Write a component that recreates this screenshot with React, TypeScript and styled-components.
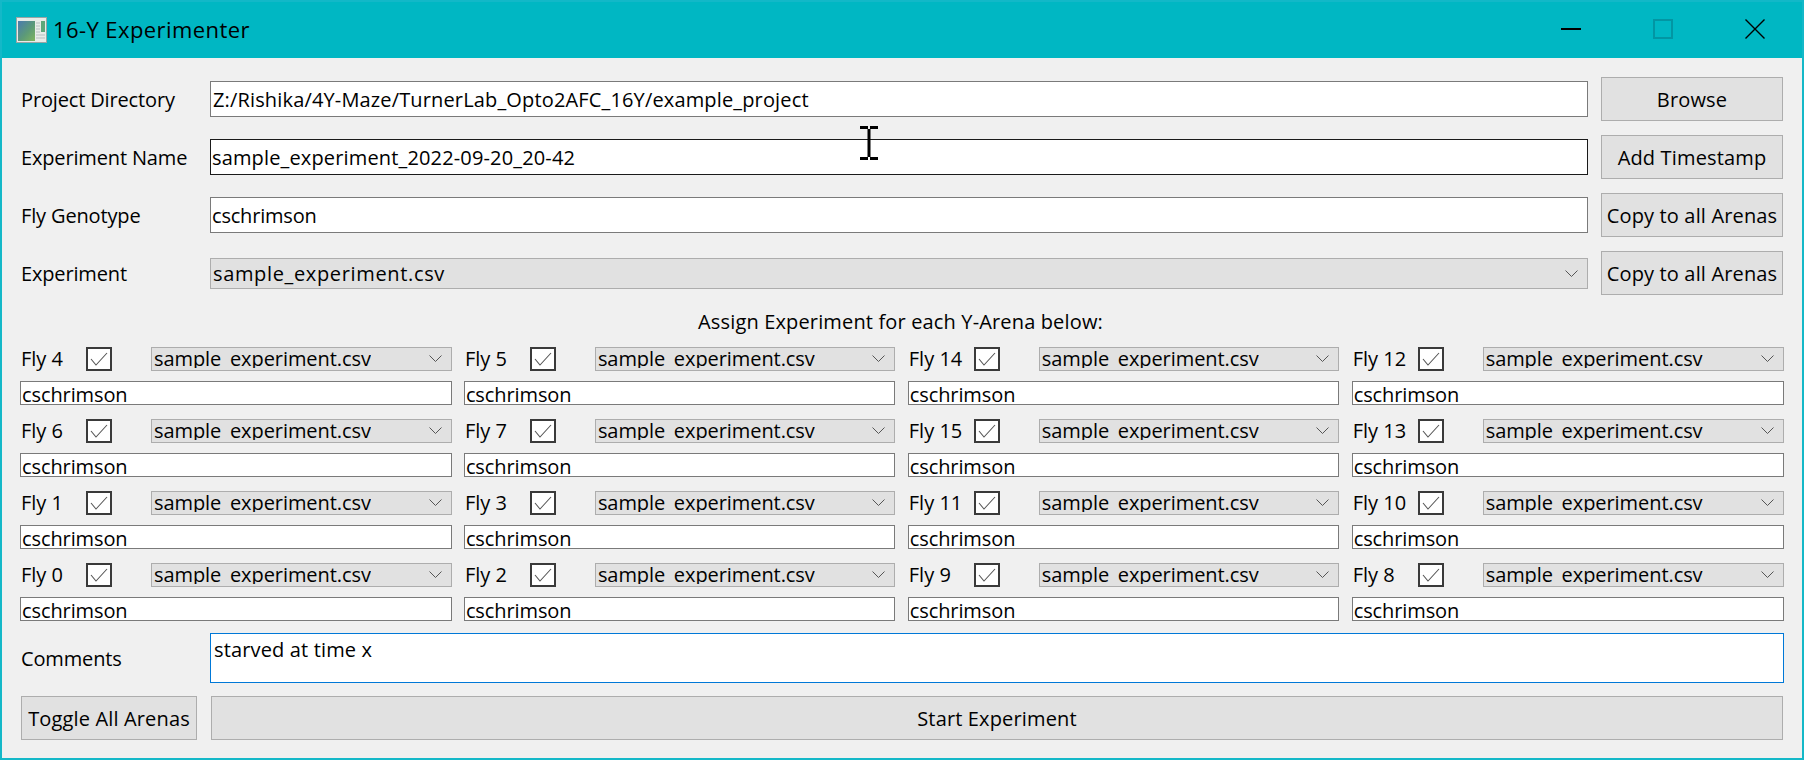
import React from "react";
import styled, { createGlobalStyle } from "styled-components";

const Global = createGlobalStyle`
  html, body { margin: 0; padding: 0; background: #00b7c3; }
  * { box-sizing: border-box; }
`;

const Window = styled.div`
  position: relative;
  width: 1804px;
  height: 760px;
  display: flex;
  flex-direction: column;
  border: 2px solid #14b8c8;
  border-top: none;
  background: #f0f0f0;
  overflow: hidden;
  font-family: "Open Sans", "Noto Sans", sans-serif;
  font-size: 20px;
  letter-spacing: 0.15px;
  color: #000;
`;

const TitleBar = styled.div`
  height: 58px;
  flex: none;
  display: flex;
  align-items: center;
  background: #00b7c3;
  border-top: 2px solid #12b8c8;
  padding-left: 14px;
`;

const TitleText = styled.span`
  margin-left: 6px;
  font-size: 22px;
  letter-spacing: 0.42px;
  padding-bottom: 2px;
`;

const Controls = styled.div`
  margin-left: auto;
  padding-right: 1px;
  display: flex;
  align-items: center;
`;

const ControlSlot = styled.div`
  width: 92px;
  height: 56px;
  padding-bottom: 2px;
  display: flex;
  align-items: center;
  justify-content: center;
`;

const Body = styled.div`
  flex: 1;
  display: flex;
  flex-direction: column;
  padding: 19px 18px 0 19px;
`;

const TopRow = styled.div`
  height: 44px;
  margin-bottom: 14px;
  display: grid;
  grid-template-columns: 176px 1378px 182px;
  column-gap: 13px;
  align-items: center;
`;

const Label = styled.div`
  white-space: nowrap;
  letter-spacing: -0.15px;
`;

const LineInput = styled.div<{ $active?: boolean }>`
  height: 36px;
  padding: 0 2px;
  display: flex;
  align-items: center;
  background: #fff;
  border: 1px solid ${(p) => (p.$active ? "#1a1a1a" : "#7a7a7a")};
  white-space: nowrap;
`;

const NameInput = styled(LineInput)`
  padding-left: 1px;
`;

const GenotypeInput = styled(NameInput)`
  letter-spacing: -0.2px;
`;

const Button = styled.div`
  height: 44px;
  display: flex;
  align-items: center;
  justify-content: center;
  background: #e1e1e1;
  border: 1px solid #adadad;
  white-space: nowrap;
`;

const MainCombo = styled.div`
  height: 31px;
  padding: 0 9px 0 2px;
  display: flex;
  align-items: center;
  justify-content: space-between;
  background: #e1e1e1;
  border: 1px solid #adadad;
  letter-spacing: 0.65px;
`;

const AssignHeading = styled.div`
  height: 36px;
  padding: 0 4px 12px 0;
  display: flex;
  justify-content: center;
  align-items: center;
`;

const ArenaGrid = styled.div`
  display: grid;
  grid-template-columns: 431.5px 431.5px 431.5px 432.5px;
  column-gap: 12.4px;
  row-gap: 12px;
  margin-left: -1px;
`;

const Arena = styled.div`
  display: flex;
  flex-direction: column;
  gap: 12px;
`;

const ArenaTop = styled.div`
  height: 24px;
  display: grid;
  grid-template-columns: 66px 26px 39px 1fr;
  align-items: center;
`;

const ArenaLabel = styled.div`
  padding-left: 1px;
  white-space: nowrap;
  letter-spacing: 0;
`;

const CheckBox = styled.div`
  width: 26px;
  height: 24px;
  display: flex;
  align-items: center;
  justify-content: center;
  background: #fff;
  border: 2px solid #3a3a3a;
`;

const ArenaCombo = styled.div`
  height: 24px;
  padding: 0 9px 0 2px;
  display: flex;
  justify-content: space-between;
  background: #e1e1e1;
  border: 1px solid #adadad;
  overflow: hidden;
  letter-spacing: -0.07px;
`;

const ClippedText = styled.span`
  line-height: 22px;
  height: 20px;
  overflow: hidden;
  white-space: nowrap;
`;

const ChevronSlot = styled.span`
  display: flex;
  align-items: center;
  height: 22px;
`;

const ArenaInput = styled.div`
  height: 24px;
  padding: 0 1px;
  background: #fff;
  border: 1px solid #7a7a7a;
  white-space: nowrap;
  line-height: 26px;
  letter-spacing: -0.1px;
`;

const CommentRow = styled.div`
  margin-top: 12px;
  display: grid;
  grid-template-columns: 189px 1574px;
  align-items: center;
`;

const CommentBox = styled.div`
  height: 50px;
  padding: 4px 3px;
  background: #fff;
  border: 1px solid #0078d7;
  white-space: nowrap;
  line-height: 24px;
`;

const BottomRow = styled.div`
  margin-top: 13px;
  display: grid;
  grid-template-columns: 176px 1572px;
  column-gap: 14px;
`;

const Cursor = styled.svg`
  position: absolute;
  left: 856px;
  top: 124px;
`;

const ArenaNames = [4, 5, 14, 12, 6, 7, 15, 13, 1, 3, 11, 10, 0, 2, 9, 8];

const Chevron = () => (
  <svg width="13" height="7" viewBox="0 0 13 7" fill="none">
    <path d="M0.5 0.5l6 6 6-6" stroke="#555" strokeWidth="1" />
  </svg>
);

const AppIcon = () => (
  <svg width="31" height="26" viewBox="0 0 31 26">
    <defs>
      <linearGradient id="pane" x1="0" y1="0" x2="1" y2="1">
        <stop offset="0" stopColor="#4a7ab0" />
        <stop offset="0.55" stopColor="#5c9a78" />
        <stop offset="1" stopColor="#7fb55e" />
      </linearGradient>
    </defs>
    <rect x="0.5" y="0.5" width="30" height="25" fill="#e8ece8" stroke="#9aa5a5" />
    <rect x="2" y="4" width="17" height="20" fill="url(#pane)" />
    <rect x="25" y="4" width="4" height="11" fill="#5fa77a" />
    <path d="M20 6h4M20 9h4M20 12h4M20 15h4M20 18h9M20 21h9" stroke="#b8bfc0" strokeWidth="1" />
  </svg>
);

export default function App() {
  return (
    <Window>
      <Global />
      <TitleBar>
        <AppIcon />
        <TitleText>16-Y Experimenter</TitleText>
        <Controls>
          <ControlSlot>
            <svg width="20" height="2" viewBox="0 0 20 2"><rect width="20" height="2" fill="#000" /></svg>
          </ControlSlot>
          <ControlSlot>
            <svg width="20" height="20" viewBox="0 0 20 20" fill="none">
              <rect x="1" y="1" width="18" height="18" stroke="#0296a3" strokeWidth="2" />
            </svg>
          </ControlSlot>
          <ControlSlot>
            <svg width="20" height="20" viewBox="0 0 20 20" fill="none">
              <path d="M0.5 0.5l19 19M19.5 0.5l-19 19" stroke="#000" strokeWidth="1.4" />
            </svg>
          </ControlSlot>
        </Controls>
      </TitleBar>
      <Body>
        <TopRow>
          <Label>Project Directory</Label>
          <LineInput>Z:/Rishika/4Y-Maze/TurnerLab_Opto2AFC_16Y/example_project</LineInput>
          <Button>Browse</Button>
        </TopRow>
        <TopRow>
          <Label>Experiment Name</Label>
          <NameInput $active>sample_experiment_2022-09-20_20-42</NameInput>
          <Button>Add Timestamp</Button>
        </TopRow>
        <TopRow>
          <Label>Fly Genotype</Label>
          <GenotypeInput>cschrimson</GenotypeInput>
          <Button>Copy to all Arenas</Button>
        </TopRow>
        <TopRow>
          <Label>Experiment</Label>
          <MainCombo>
            <span>sample_experiment.csv</span>
            <Chevron />
          </MainCombo>
          <Button>Copy to all Arenas</Button>
        </TopRow>
        <AssignHeading>Assign Experiment for each Y-Arena below:</AssignHeading>
        <ArenaGrid>
          {ArenaNames.map((n) => (
            <Arena key={n}>
              <ArenaTop>
                <ArenaLabel>Fly {n}</ArenaLabel>
                <CheckBox>
                  <svg width="18" height="14" viewBox="0 0 18 14" fill="none">
                    <path d="M1 7l5 6L17 1" stroke="#555" strokeWidth="1.1" />
                  </svg>
                </CheckBox>
                <span />
                <ArenaCombo>
                  <ClippedText>sample_experiment.csv</ClippedText>
                  <ChevronSlot><Chevron /></ChevronSlot>
                </ArenaCombo>
              </ArenaTop>
              <ArenaInput>cschrimson</ArenaInput>
            </Arena>
          ))}
        </ArenaGrid>
        <CommentRow>
          <Label>Comments</Label>
          <CommentBox>starved at time x</CommentBox>
        </CommentRow>
        <BottomRow>
          <Button>Toggle All Arenas</Button>
          <Button>Start Experiment</Button>
        </BottomRow>
      </Body>
      <Cursor width="22" height="38" viewBox="0 0 22 38">
        <path d="M2 3.5h8M12 3.5h8M2 34.5h8M12 34.5h8" stroke="#000" strokeWidth="3" />
        <path d="M11 5v28" stroke="#000" strokeWidth="3" />
      </Cursor>
    </Window>
  );
}
